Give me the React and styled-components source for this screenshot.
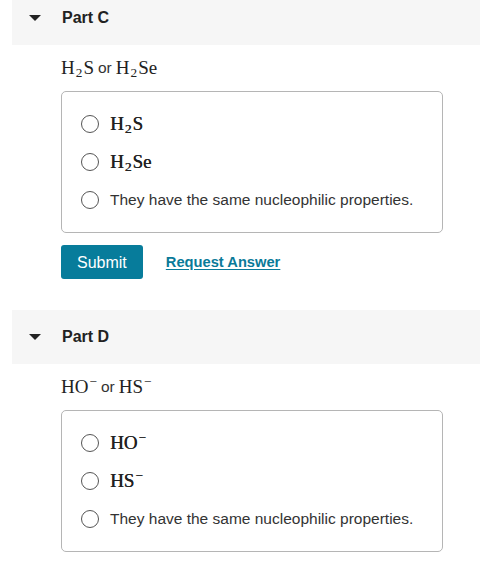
import React from "react";
import styled, { createGlobalStyle } from "styled-components";

const GlobalStyle = createGlobalStyle`
  html, body {
    margin: 0;
    padding: 0;
    background: #fff;
    font-family: "Liberation Sans", Arial, sans-serif;
    color: #222;
  }
`;

const Page = styled.div`
  margin-top: -9px;
  width: 480px;
`;

const Section = styled.section`
  display: flex;
  flex-direction: column;
  margin-bottom: 31px;
`;

const PartHeader = styled.div`
  margin-left: 12px;
  height: 54px;
  background: #f6f6f6;
  display: flex;
  align-items: center;
  padding-left: 17px;
  gap: 21px;
`;

const Caret = styled.span`
  width: 0;
  height: 0;
  border-left: 6px solid transparent;
  border-right: 6px solid transparent;
  border-top: 6px solid #222;
`;

const PartTitle = styled.h2`
  margin: 0;
  font-size: 16px;
  font-weight: bold;
  color: #222;
`;

const Body = styled.div`
  margin-left: 61px;
  width: 382px;
`;

const Question = styled.div`
  height: 46px;
  display: flex;
  align-items: center;
  font-size: 15.5px;
  color: #333;
`;

const Chem = styled.span`
  font-family: "Liberation Serif", "Times New Roman", serif;
  font-size: 19px;
  color: #222;
  ${(p) => p.$bold && "text-shadow: 0.4px 0 0 #222;"}
`;

const Sub = styled.sub`
  font-size: 70%;
  vertical-align: -0.22em;
  line-height: 0;
  margin: 0 1px;
`;

const Sup = styled.sup`
  font-size: 70%;
  vertical-align: 0.55em;
  line-height: 0;
  margin-left: 1px;
`;

const Or = styled.span`
  margin: 0 4px;
`;

const Choices = styled.div`
  border: 1px solid #b5b5b5;
  border-radius: 5px;
  padding: 13px 19px 13px;
  display: flex;
  flex-direction: column;
`;

const Choice = styled.label`
  height: 38px;
  display: flex;
  align-items: center;
  gap: 11px;
  font-size: 15.5px;
  color: #333;
  white-space: nowrap;
`;

const Radio = styled.span`
  width: 16px;
  height: 16px;
  border: 1px solid #555;
  border-radius: 50%;
  flex-shrink: 0;
`;

const Actions = styled.div`
  display: flex;
  align-items: center;
  margin-top: 12px;
  gap: 23px;
`;

const SubmitButton = styled.button`
  height: 34px;
  padding: 1px 16px 0;
  border: none;
  border-radius: 3px;
  background: #077c9b;
  color: #fff;
  font-family: "Liberation Sans", Arial, sans-serif;
  font-size: 16px;
`;

const RequestLink = styled.a`
  color: #0a7a99;
  font-weight: bold;
  font-size: 14.7px;
  text-decoration: underline;
  text-underline-offset: 2px;
`;

function Formula({ parts, bold }) {
  return (
    <Chem $bold={bold}>
      {parts.map((p, i) =>
        p.sub ? <Sub key={i}>{p.sub}</Sub> : p.sup ? <Sup key={i}>{p.sup}</Sup> : <span key={i}>{p.t}</span>
      )}
    </Chem>
  );
}

const h2s = [{ t: "H" }, { sub: "2" }, { t: "S" }];
const h2se = [{ t: "H" }, { sub: "2" }, { t: "Se" }];
const ho = [{ t: "HO" }, { sup: "−" }];
const hs = [{ t: "HS" }, { sup: "−" }];

const parts = [
  { name: "Part C", a: h2s, b: h2se, actions: true },
  { name: "Part D", a: ho, b: hs, actions: false },
];

export default function App() {
  return (
    <>
      <GlobalStyle />
      <Page>
        {parts.map((part) => (
          <Section key={part.name}>
            <PartHeader>
              <Caret />
              <PartTitle>{part.name}</PartTitle>
            </PartHeader>
            <Body>
              <Question>
                <Formula parts={part.a} />
                <Or>or</Or>
                <Formula parts={part.b} />
              </Question>
              <Choices>
                <Choice>
                  <Radio />
                  <Formula parts={part.a} bold />
                </Choice>
                <Choice>
                  <Radio />
                  <Formula parts={part.b} bold />
                </Choice>
                <Choice>
                  <Radio />
                  They have the same nucleophilic properties.
                </Choice>
              </Choices>
              {part.actions && (
                <Actions>
                  <SubmitButton>Submit</SubmitButton>
                  <RequestLink href="#">Request Answer</RequestLink>
                </Actions>
              )}
            </Body>
          </Section>
        ))}
      </Page>
    </>
  );
}
